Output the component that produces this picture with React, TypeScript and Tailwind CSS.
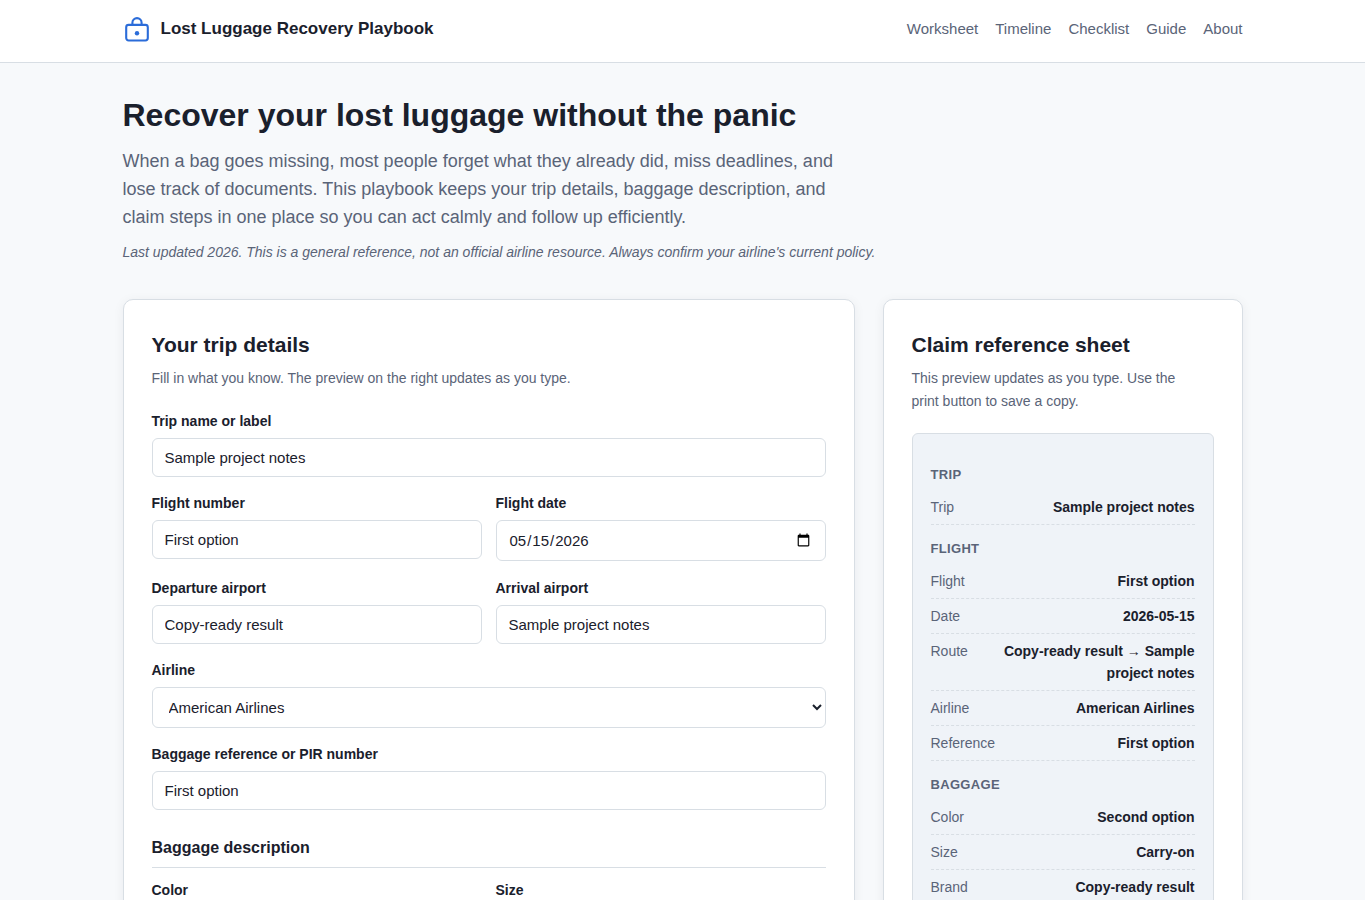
import { useState } from "react";
import type { ReactNode } from "react";

const NAV = ["Worksheet", "Timeline", "Checklist", "Guide", "About"];

const CONTROL =
  "block w-full rounded-md border border-[#d8dee4] bg-white px-3 text-[15px] leading-[17px] text-[#1a202c] outline-none focus:border-[#2b6fdb]";

interface Details {
  trip: string;
  flight: string;
  date: string;
  from: string;
  to: string;
  airline: string;
  reference: string;
  color: string;
  size: string;
  brand: string;
}

function BagLogo() {
  return (
    <svg className="h-7 w-7 shrink-0" viewBox="0 0 28 28" fill="none" stroke="#2b6cd9" strokeWidth="2.1" aria-hidden="true">
      <rect x="3.2" y="9.9" width="21.6" height="15.6" rx="2.4" />
      <path d="M9.4 9.9V7.7a4.6 4.6 0 0 1 9.2 0v2.2" />
      <circle cx="14" cy="18.2" r="2.2" fill="#2b6cd9" stroke="none" />
    </svg>
  );
}

function Field({ id, label, children }: { id: string; label: string; children: ReactNode }) {
  return (
    <div>
      <label htmlFor={id} className="mb-[6px] block text-sm leading-[22px] font-bold">
        {label}
      </label>
      {children}
    </div>
  );
}

function Group({ title, rows }: { title: string; rows: [string, string][] }) {
  return (
    <section>
      <h3 className="pt-[14px] pb-[5px] text-[13px] leading-5 font-bold tracking-wide text-[#5a6478] uppercase">{title}</h3>
      <dl>
        {rows.map(([name, value]) => (
          <div key={name} className="flex justify-between gap-3 border-b border-dashed border-[#d8dee4] py-[6px] text-sm leading-[22px]">
            <dt className="text-[#5a6478]">{name}</dt>
            <dd className="max-w-[200px] text-right font-bold">{value}</dd>
          </div>
        ))}
      </dl>
    </section>
  );
}

export default function App() {
  const [d, setD] = useState<Details>({
    trip: "Sample project notes",
    flight: "First option",
    date: "2026-05-15",
    from: "Copy-ready result",
    to: "Sample project notes",
    airline: "American Airlines",
    reference: "First option",
    color: "Second option",
    size: "Carry-on",
    brand: "Copy-ready result",
  });

  const text = (key: keyof Details) => (
    <input
      id={key}
      type="text"
      value={d[key]}
      onChange={(e) => setD({ ...d, [key]: e.target.value })}
      className={`${CONTROL} py-[10px]`}
    />
  );

  return (
    <div className="min-h-screen bg-[#f7f9fb] font-['Liberation_Sans',Arial,sans-serif] text-[#1a202c]">
      <header className="border-b border-[#d8dee4] bg-white">
        <div className="mx-auto flex max-w-[1160px] items-center justify-between px-5 pt-[14px] pb-[19px]">
          <a href="#top" className="flex items-center gap-[10px] text-[17px] leading-[29px] font-bold">
            <BagLogo />
            <span>Lost Luggage Recovery Playbook</span>
          </a>
          <nav className="flex gap-[17px] text-[15px] leading-6 text-[#5a6478]">
            {NAV.map((item) => (
              <a key={item} href={`#${item.toLowerCase()}`}>
                {item}
              </a>
            ))}
          </nav>
        </div>
      </header>

      <main id="top" className="mx-auto max-w-[1160px] px-5 pt-8 pb-12">
        <h1 className="text-[32px] leading-10 font-bold">Recover your lost luggage without the panic</h1>
        <p className="mt-3 max-w-[720px] text-[18px] leading-7 text-[#5a6478]">
          When a bag goes missing, most people forget what they already did, miss deadlines, and lose track of documents.
          This playbook keeps your trip details, baggage description, and claim steps in one place so you can act calmly
          and follow up efficiently.
        </p>
        <p className="mt-[10px] text-[14px] leading-[22px] text-[#5a6478] italic">
          Last updated 2026. This is a general reference, not an official airline resource. Always confirm your airline's
          current policy.
        </p>

        <div className="mt-9 grid grid-cols-[minmax(0,1fr)_360px] gap-7">
          <section id="worksheet" className="rounded-[10px] border border-[#d8dee4] bg-white p-7 shadow-[0_2px_12px_rgba(26,32,44,0.06)]">
            <h2 className="text-[21px] leading-[34px] font-bold">Your trip details</h2>
            <p className="mt-[5px] mb-5 text-[14px] leading-[23px] text-[#5a6478]">
              Fill in what you know. The preview on the right updates as you type.
            </p>
            <form className="grid gap-[15px]">
              <Field id="trip" label="Trip name or label">
                {text("trip")}
              </Field>
              <div className="grid grid-cols-2 gap-x-[14px] gap-y-4">
                <Field id="flight" label="Flight number">
                  {text("flight")}
                </Field>
                <Field id="date" label="Flight date">
                  <input
                    id="date"
                    type="date"
                    value={d.date}
                    onChange={(e) => setD({ ...d, date: e.target.value })}
                    className={`${CONTROL} h-[41px]`}
                  />
                </Field>
                <Field id="from" label="Departure airport">
                  {text("from")}
                </Field>
                <Field id="to" label="Arrival airport">
                  {text("to")}
                </Field>
              </div>
              <Field id="airline" label="Airline">
                <select
                  id="airline"
                  value={d.airline}
                  onChange={(e) => setD({ ...d, airline: e.target.value })}
                  className={`${CONTROL} h-[41px]`}
                >
                  <option>American Airlines</option>
                </select>
              </Field>
              <Field id="reference" label="Baggage reference or PIR number">
                {text("reference")}
              </Field>
              <h3 className="mt-[10px] -mb-1 border-b border-[#d8dee4] pb-[6px] text-[16px] leading-[26px] font-bold">
                Baggage description
              </h3>
              <div className="grid grid-cols-2 gap-x-[14px] gap-y-4">
                <Field id="color" label="Color">
                  {text("color")}
                </Field>
                <Field id="size" label="Size">
                  {text("size")}
                </Field>
              </div>
            </form>
          </section>

          <aside className="rounded-[10px] border border-[#d8dee4] bg-white p-7 shadow-[0_2px_12px_rgba(26,32,44,0.06)]">
            <h2 className="text-[21px] leading-[34px] font-bold">Claim reference sheet</h2>
            <p className="mt-[5px] mb-5 max-w-[280px] text-[14px] leading-[23px] text-[#5a6478]">
              This preview updates as you type. Use the print button to save a copy.
            </p>
            <div className="rounded-md border border-[#d8dee4] bg-[#eff3f8] px-[18px] py-[17px]">
              <Group title="Trip" rows={[["Trip", d.trip]]} />
              <Group
                title="Flight"
                rows={[
                  ["Flight", d.flight],
                  ["Date", d.date],
                  ["Route", `${d.from} → ${d.to}`],
                  ["Airline", d.airline],
                  ["Reference", d.reference],
                ]}
              />
              <Group
                title="Baggage"
                rows={[
                  ["Color", d.color],
                  ["Size", d.size],
                  ["Brand", d.brand],
                ]}
              />
            </div>
          </aside>
        </div>
      </main>
    </div>
  );
}
